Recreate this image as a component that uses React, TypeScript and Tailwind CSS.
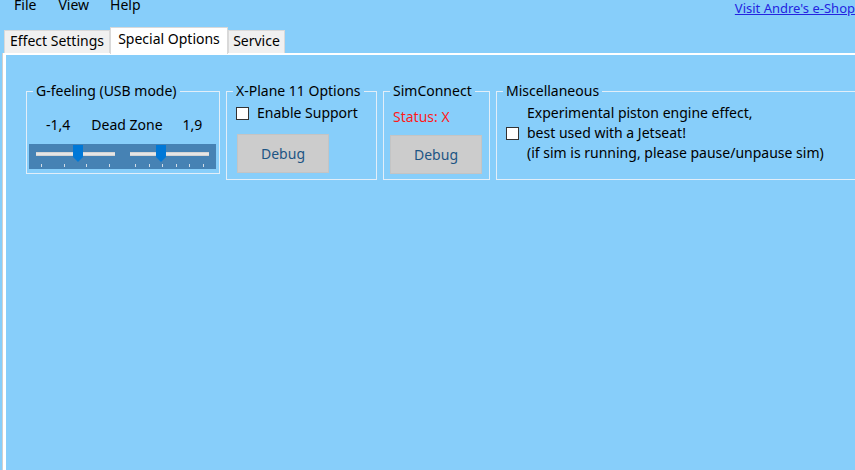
import React from "react";

const font = { fontFamily: '"Segoe UI", "Noto Sans", "Open Sans", sans-serif' };

function Check() {
  return <span className="inline-block w-[13px] h-[13px] bg-white border border-[#333] shrink-0" />;
}

function DebugButton() {
  return (
    <div className="w-[92px] h-[39px] bg-[#cccccc] border border-[#c4c4c4] flex items-center justify-center text-[14px] text-[#1d5584]">
      Debug
    </div>
  );
}

function Slider({ thumb, ticks }: { thumb: number; ticks: number }) {
  return (
    <div className="relative w-[79px] h-[25px]">
      <div className="absolute left-0 right-0 top-[8px] h-[4px] bg-[#e6e6e6] border-y border-[#d4d4d4]" />
      <div
        className="absolute top-[1px] w-[10px] h-[17px] bg-[#0078d7]"
        style={{ left: thumb, clipPath: "polygon(0 0,100% 0,100% 70%,50% 100%,0 70%)" }}
      />
      <div className="absolute left-[5px] right-[5px] top-[20px] flex justify-between">
        {Array.from({ length: ticks }).map((_, i) => (
          <span key={i} className="w-px h-[3px] bg-[#d4dde6]" />
        ))}
      </div>
    </div>
  );
}

export default function App() {
  return (
    <div className="w-[855px] h-[470px] bg-[#87cefa] overflow-hidden flex flex-col text-black" style={font}>
      <div className="h-[26px] flex items-start pl-[14px] text-[14px]">
        <span className="-mt-[5px] leading-[20px]">File</span>
        <span className="-mt-[5px] leading-[20px] ml-[22px]">View</span>
        <span className="-mt-[5px] leading-[20px] ml-[21px]">Help</span>
        <a className="ml-auto text-[13px] leading-[16px] text-[#2424e0] underline">Visit Andre's e-Shop</a>
      </div>
      <div className="flex items-end pl-[4px] h-[27px] text-[14px]">
        <div className="h-[23px] w-[106px] pb-[4px] bg-[#f0f0f0] border border-[#d9d9d9] border-b-0 flex items-center justify-center">Effect Settings</div>
        <div className="h-[27px] w-[118px] pb-[6px] bg-white border border-[#d9d9d9] border-b-0 flex items-center justify-center -mb-[1px] z-10">Special Options</div>
        <div className="h-[23px] w-[57px] pb-[4px] bg-[#f0f0f0] border border-[#d9d9d9] border-b-0 flex items-center justify-center">Service</div>
      </div>
      <div className="flex-1 ml-[2px] border-l-[1px] border-[#d0d0d0]">
        <div className="h-full border-t-2 border-l-[3px] border-white pt-[27px] pl-[20px] flex items-start gap-[6px] text-[14px]">
          <fieldset className="w-[194px] h-[92px] border border-[#e2eef8] p-0">
            <legend className="ml-[6px] px-[3px] leading-[18px]">G-feeling (USB mode)</legend>
            <div className="flex pl-[19px] mt-[16px] leading-[18px]">
              <span>-1,4</span>
              <span className="ml-[21px]">Dead Zone</span>
              <span className="ml-[20px]">1,9</span>
            </div>
            <div className="mt-[10px] ml-[2px] w-[187px] h-[25px] bg-[#4682b4] flex gap-[15px] pl-[7px]">
              <Slider thumb={37} ticks={4} />
              <Slider thumb={26} ticks={6} />
            </div>
          </fieldset>
          <fieldset className="w-[151px] h-[98px] border border-[#e2eef8] p-0">
            <legend className="ml-[6px] px-[3px] leading-[18px]">X-Plane 11 Options</legend>
            <div className="flex items-center gap-[8px] leading-[18px] mt-[4px] pl-[9px]">
              <Check />
              <span>Enable Support</span>
            </div>
            <div className="mt-[12px] pl-[10px]">
              <DebugButton />
            </div>
          </fieldset>
          <fieldset className="w-[107px] h-[98px] border border-[#e2eef8] p-0">
            <legend className="ml-[6px] px-[3px] leading-[18px]">SimConnect</legend>
            <div className="pl-[9px] text-[#ff1a1a] leading-[18px] mt-[8px]">Status: X</div>
            <div className="mt-[9px] pl-[6px]">
              <DebugButton />
            </div>
          </fieldset>
          <fieldset className="flex-1 h-[98px] border border-r-0 border-[#e2eef8] p-0">
            <legend className="ml-[6px] px-[3px] leading-[18px]">Miscellaneous</legend>
            <div className="flex items-center gap-[8px] leading-[20px] pl-[9px] mt-[3px]">
              <Check />
              <div>
                <div>Experimental piston engine effect,</div>
                <div>best used with a Jetseat!</div>
                <div>(if sim is running, please pause/unpause sim)</div>
              </div>
            </div>
          </fieldset>
        </div>
      </div>
    </div>
  );
}
